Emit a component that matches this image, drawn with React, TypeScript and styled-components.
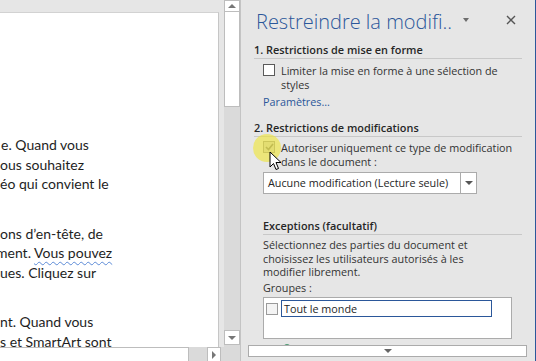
import styled, { createGlobalStyle } from "styled-components";

const Global = createGlobalStyle`
  html, body {
    margin: 0;
    padding: 0;
  }
  body {
    width: 536px;
    height: 361px;
    overflow: hidden;
    background: #e6e6e6;
  }
`;

const Window = styled.div`
  display: flex;
  width: 536px;
  height: 361px;
  background: #e6e6e6;
`;

/* ---------- document side ---------- */

const DocArea = styled.div`
  display: grid;
  grid-template-columns: 224px 16px;
  grid-template-rows: 347px 14px;
  width: 240px;
  flex-shrink: 0;
`;

const PageViewport = styled.div`
  grid-column: 1;
  grid-row: 1;
  padding: 12px 5px 0 0;
  box-sizing: border-box;
  overflow: hidden;
`;

const Page = styled.div`
  height: 100%;
  box-sizing: border-box;
  background: #fff;
  border-top: 1px solid #d2d2d2;
  border-right: 1px solid #c6c6c6;
  padding-top: 122px;
  font-family: Lato, "Open Sans", sans-serif;
  font-size: 14px;
  color: #1e1e1e;
  overflow: hidden;
`;

const Para = styled.div`
  margin-bottom: 30px;
`;

const Line = styled.div<{ $cut?: number }>`
  line-height: 19.5px;
  white-space: nowrap;
  margin-left: ${(p) => -(p.$cut ?? 0)}px;
`;

const Squiggle = styled.span`
  text-decoration: underline wavy #5b8ad6;
  text-decoration-thickness: 1px;
  text-underline-offset: 3px;
`;

const VScroll = styled.div`
  grid-column: 2;
  grid-row: 1 / span 2;
  display: flex;
  flex-direction: column;
  background: #dadada;
`;

const ScrollBtn = styled.div<{ $h: number }>`
  height: ${(p) => p.$h}px;
  background: #fff;
  border: 1px solid #bdbdbd;
  box-sizing: border-box;
  display: flex;
  align-items: center;
  justify-content: center;
  flex-shrink: 0;
`;

const Tri = styled.span<{ $dir: "up" | "down" | "right"; $c?: string }>`
  width: 0;
  height: 0;
  ${(p) =>
    p.$dir === "up"
      ? `border-left: 4px solid transparent; border-right: 4px solid transparent; border-bottom: 4px solid ${p.$c ?? "#777"};`
      : p.$dir === "down"
      ? `border-left: 4px solid transparent; border-right: 4px solid transparent; border-top: 4px solid ${p.$c ?? "#777"};`
      : `border-top: 4px solid transparent; border-bottom: 4px solid transparent; border-left: 4px solid ${p.$c ?? "#777"};`}
`;

const VThumb = styled.div`
  height: 95px;
  background: #fff;
  border: 1px solid #bdbdbd;
  border-top: none;
  box-sizing: border-box;
`;

const Fill = styled.div`
  flex: 1;
`;

const HScroll = styled.div`
  grid-column: 1;
  grid-row: 2;
  display: flex;
  background: #dadada;
  padding-right: 3px;
`;

const HThumb = styled.div`
  width: 189px;
  background: #fff;
  border-top: 1px solid #bdbdbd;
  border-right: 1px solid #bdbdbd;
  box-sizing: border-box;
`;

const HBtn = styled.div`
  width: 14px;
  background: #fff;
  border: 1px solid #bdbdbd;
  border-bottom: none;
  box-sizing: border-box;
  display: flex;
  align-items: center;
  justify-content: center;
`;

/* ---------- task pane ---------- */

const Pane = styled.div`
  position: relative;
  flex: 1;
  border-left: 1px solid #c4c4c4;
  border-right: 1px solid #2b579a;
  padding: 0 13px;
  box-sizing: border-box;
  overflow: hidden;
  font-family: "Open Sans", sans-serif;
  font-size: 10.8px;
  color: #333;
`;

const TitleRow = styled.div`
  display: flex;
  align-items: center;
  padding: 10px 0 0 2px;
  height: 34px;
  box-sizing: border-box;
`;

const Title = styled.div`
  font-family: "Open Sans", sans-serif;
  font-weight: 300;
  font-size: 20px;
  line-height: 24px;
  color: #2b579a;
  white-space: nowrap;
`;

const MenuArrow = styled.span`
  margin-left: 11px;
  margin-top: -4px;
  width: 0;
  height: 0;
  border-left: 3.5px solid transparent;
  border-right: 3.5px solid transparent;
  border-top: 4px solid #6d6d6d;
`;

const CloseBtn = styled.span`
  margin-left: auto;
  margin-right: 6px;
  margin-top: -4px;
  display: flex;
`;

const SectionHead = styled.div<{ $indent?: number; $top: number }>`
  margin: ${(p) => `${p.$top}px 0 0 ${p.$indent ?? 0}px`};
  font-weight: 600;
  font-size: 10.9px;
  line-height: 14px;
  color: #262626;
  border-bottom: 1px solid #c8c8c8;
  padding-bottom: 1px;
  white-space: nowrap;
`;

const CheckRow = styled.div<{ $top: number }>`
  display: flex;
  align-items: flex-start;
  gap: 6px;
  margin: ${(p) => p.$top}px 0 0 9px;
  line-height: 13.5px;
`;

const Box = styled.span<{ $checked?: boolean; $dim?: boolean }>`
  width: 12px;
  height: 12px;
  flex-shrink: 0;
  box-sizing: border-box;
  border: 1px solid ${(p) => (p.$dim ? "#9a9a9a" : "#5a5a5a")};
  background: ${(p) => (p.$checked ? "#cfcfcf" : p.$dim ? "#f4f4f4" : "#fff")};
  display: flex;
  align-items: center;
  justify-content: center;
`;

const CheckText = styled.div`
  white-space: nowrap;
`;

const Link = styled.div`
  margin: 4px 0 0 9px;
  color: #2b579a;
  line-height: 14px;
`;

const Select = styled.div`
  display: flex;
  margin: 4px 0 0 9px;
  width: 214px;
  height: 22px;
  box-sizing: border-box;
  background: #fff;
  border: 1px solid #ababab;
`;

const SelectValue = styled.div`
  flex: 1;
  padding-left: 4px;
  line-height: 20px;
  color: #262626;
  white-space: nowrap;
`;

const SelectBtn = styled.div`
  width: 15px;
  border-left: 1px solid #ababab;
  display: flex;
  align-items: center;
  justify-content: center;
`;

const Text = styled.div<{ $top: number }>`
  margin: ${(p) => p.$top}px 0 0 9px;
  line-height: 13.5px;
  color: #333;
  white-space: nowrap;
`;

const ListBox = styled.div`
  margin: 3px 10px 0 9px;
  height: 42px;
  box-sizing: border-box;
  background: #fff;
  border: 1px solid #ababab;
  padding: 2px 19px 0 2px;
`;

const ListItem = styled.div`
  display: flex;
  align-items: center;
  gap: 3px;
`;

const ItemField = styled.div`
  flex: 1;
  height: 17px;
  box-sizing: border-box;
  border: 1px solid #2b579a;
  padding-left: 2px;
  line-height: 15px;
  color: #262626;
`;

const GreenDot = styled.div`
  margin: 5px 0 0 30px;
  width: 6px;
  height: 6px;
  border-radius: 50%;
  background: #4c9a73;
`;

const BottomBar = styled.div`
  position: absolute;
  left: 7px;
  right: 8px;
  bottom: 4px;
  height: 12px;
  box-sizing: border-box;
  background: #fff;
  border: 1px solid #ababab;
  display: flex;
  align-items: center;
  justify-content: center;
`;

const Highlight = styled.div`
  position: absolute;
  left: 12px;
  top: 134px;
  width: 28px;
  height: 28px;
  border-radius: 50%;
  background: rgba(240, 230, 50, 0.6);
  pointer-events: none;
`;

const Cursor = styled.svg`
  position: absolute;
  left: 28px;
  top: 151px;
`;

const Check = () => (
  <svg width="9" height="8" viewBox="0 0 9 8">
    <path d="M1 4 L3.5 6.5 L8 1" fill="none" stroke="#7d7d7d" strokeWidth="1.6" />
  </svg>
);

export default function App() {
  return (
    <>
      <Global />
      <Window>
        <DocArea>
          <PageViewport>
            <Page>
              <Para>
                <Line $cut={-1}>e. Quand vous</Line>
                <Line>ous souhaitez</Line>
                <Line>éo qui convient le</Line>
              </Para>
              <Para>
                <Line>ons d’en-tête, de</Line>
                <Line $cut={4}>
                  ment. <Squiggle>Vous pouvez</Squiggle>
                </Line>
                <Line>ues. Cliquez sur</Line>
              </Para>
              <Para>
                <Line>nt. Quand vous</Line>
                <Line>s et SmartArt sont</Line>
              </Para>
            </Page>
          </PageViewport>
          <VScroll>
            <ScrollBtn $h={12}>
              <Tri $dir="up" />
            </ScrollBtn>
            <VThumb />
            <Fill />
            <ScrollBtn $h={15}>
              <Tri $dir="down" />
            </ScrollBtn>
            <div style={{ height: 16 }} />
          </VScroll>
          <HScroll>
            <HThumb />
            <Fill />
            <HBtn>
              <Tri $dir="right" />
            </HBtn>
          </HScroll>
        </DocArea>

        <Pane>
          <TitleRow>
            <Title>Restreindre la modifi..</Title>
            <MenuArrow />
            <CloseBtn>
              <svg width="10" height="10" viewBox="0 0 10 10">
                <path d="M1 1 L9 9 M9 1 L1 9" stroke="#555" strokeWidth="1.4" />
              </svg>
            </CloseBtn>
          </TitleRow>

          <SectionHead $top={9}>1. Restrictions de mise en forme</SectionHead>
          <CheckRow $top={5}>
            <Box />
            <CheckText>
              Limiter la mise en forme à une sélection de
              <br />
              styles
            </CheckText>
          </CheckRow>
          <Link>Paramètres...</Link>

          <SectionHead $top={12}>2. Restrictions de modifications</SectionHead>
          <CheckRow $top={4}>
            <Box $checked $dim>
              <Check />
            </Box>
            <CheckText>
              Autoriser uniquement ce type de modification
              <br />
              dans le document :
            </CheckText>
          </CheckRow>
          <Select>
            <SelectValue>Aucune modification (Lecture seule)</SelectValue>
            <SelectBtn>
              <Tri $dir="down" $c="#555" />
            </SelectBtn>
          </Select>

          <SectionHead $top={25} $indent={9}>
            Exceptions (facultatif)
          </SectionHead>
          <Text $top={3}>
            Sélectionnez des parties du document et
            <br />
            choisissez les utilisateurs autorisés à les
            <br />
            modifier librement.
          </Text>
          <Text $top={2}>Groupes :</Text>
          <ListBox>
            <ListItem>
              <Box $dim />
              <ItemField>Tout le monde</ItemField>
            </ListItem>
          </ListBox>
          <GreenDot />

          <BottomBar>
            <Tri $dir="down" $c="#666" />
          </BottomBar>
          <Highlight />
          <Cursor width="13" height="20" viewBox="0 0 13 20">
            <path
              d="M1 1 L1 16 L4.5 12.5 L7 18.5 L9.5 17.5 L7 11.5 L12 11.5 Z"
              fill="#fff"
              stroke="#000"
              strokeWidth="1"
              strokeLinejoin="miter"
            />
          </Cursor>
        </Pane>
      </Window>
    </>
  );
}
